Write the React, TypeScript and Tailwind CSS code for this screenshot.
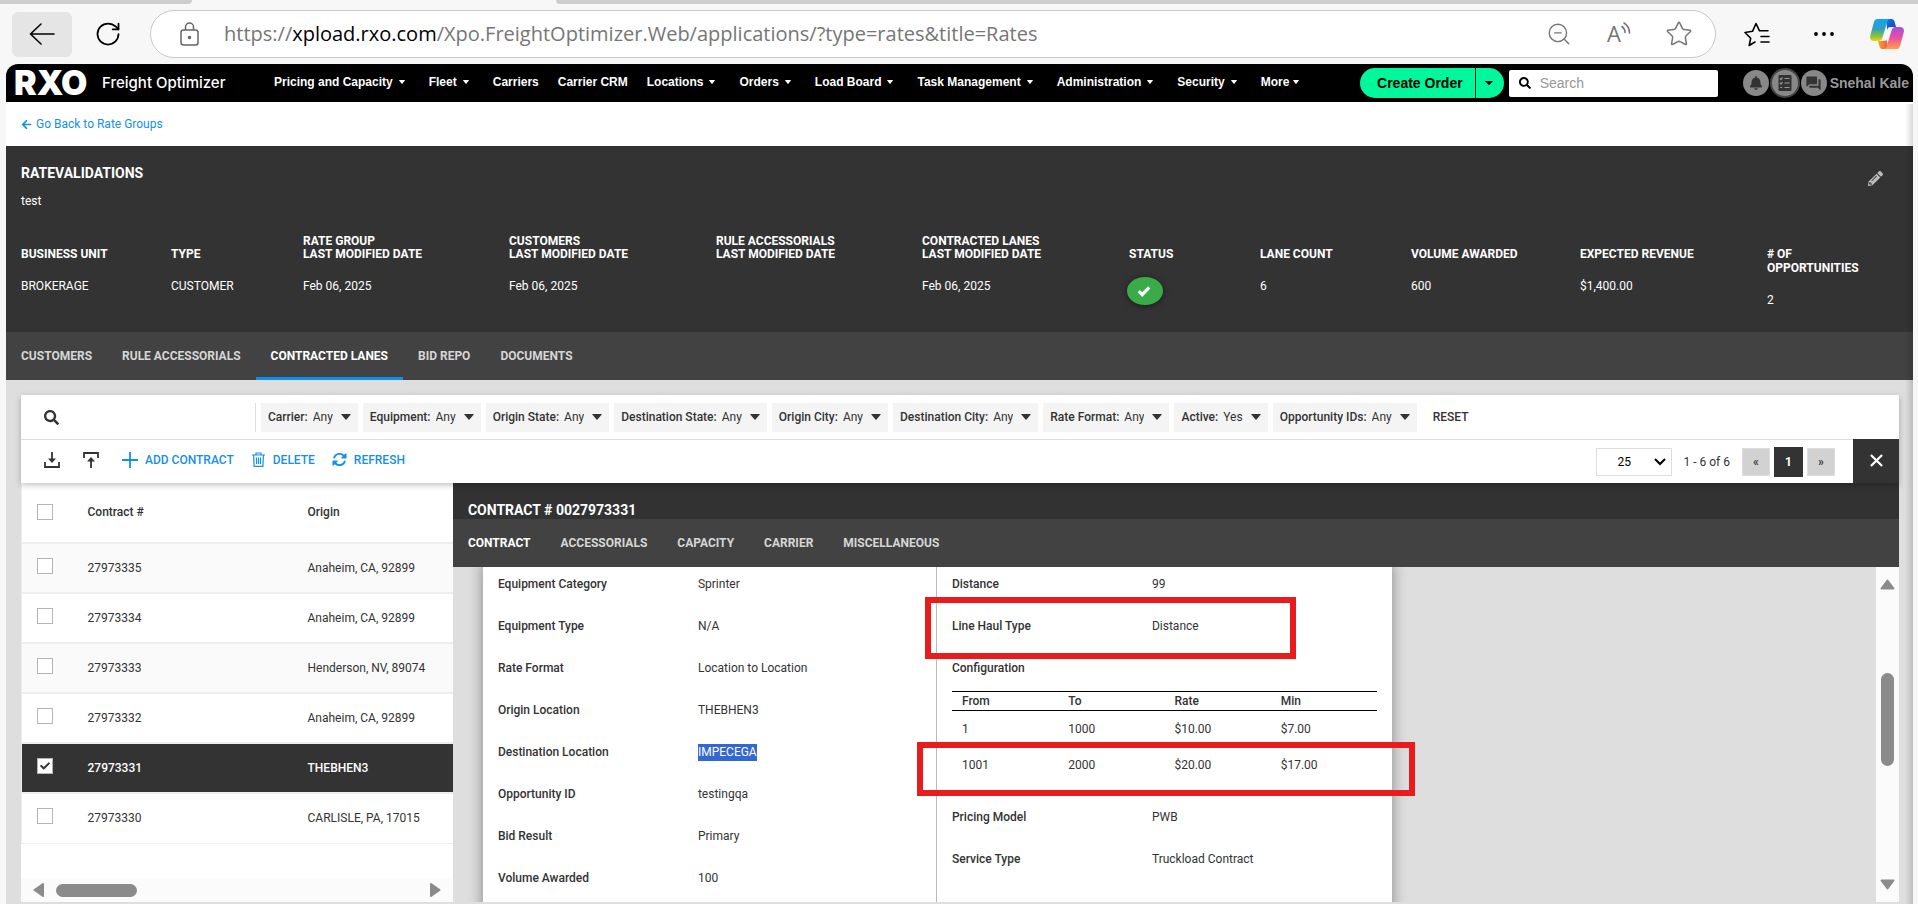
import { useState } from 'react';
import type { ReactNode } from 'react';
import { RotateCw, ZoomOut, Star } from 'lucide-react';
import { FaArrowLeft, FaBell, FaPencilAlt, FaSearch, FaCheck } from 'react-icons/fa';
import { FaRotate } from 'react-icons/fa6';
import { MdForum } from 'react-icons/md';

type NavItem = { label: string; menu: boolean };

const navItems: NavItem[] = [
  { label: 'Pricing and Capacity', menu: true },
  { label: 'Fleet', menu: true },
  { label: 'Carriers', menu: false },
  { label: 'Carrier CRM', menu: false },
  { label: 'Locations', menu: true },
  { label: 'Orders', menu: true },
  { label: 'Load Board', menu: true },
  { label: 'Task Management', menu: true },
  { label: 'Administration', menu: true },
  { label: 'Security', menu: true },
];

type Fact = { over?: string; label: string; value: ReactNode };

const facts: Fact[] = [
  { label: 'BUSINESS UNIT', value: 'BROKERAGE' },
  { label: 'TYPE', value: 'CUSTOMER' },
  { over: 'RATE GROUP', label: 'LAST MODIFIED DATE', value: 'Feb 06, 2025' },
  { over: 'CUSTOMERS', label: 'LAST MODIFIED DATE', value: 'Feb 06, 2025' },
  { over: 'RULE ACCESSORIALS', label: 'LAST MODIFIED DATE', value: '' },
  { over: 'CONTRACTED LANES', label: 'LAST MODIFIED DATE', value: 'Feb 06, 2025' },
  { label: 'STATUS', value: <StatusBadge /> },
  { label: 'LANE COUNT', value: '6' },
  { label: 'VOLUME AWARDED', value: '600' },
  { label: 'EXPECTED REVENUE', value: '$1,400.00' },
  { label: '# OF OPPORTUNITIES', value: '2' },
];

const pageTabs = ['CUSTOMERS', 'RULE ACCESSORIALS', 'CONTRACTED LANES', 'BID REPO', 'DOCUMENTS'];
const detailTabs = ['CONTRACT', 'ACCESSORIALS', 'CAPACITY', 'CARRIER', 'MISCELLANEOUS'];

const filters = [
  { label: 'Carrier', value: 'Any' },
  { label: 'Equipment', value: 'Any' },
  { label: 'Origin State', value: 'Any' },
  { label: 'Destination State', value: 'Any' },
  { label: 'Origin City', value: 'Any' },
  { label: 'Destination City', value: 'Any' },
  { label: 'Rate Format', value: 'Any' },
  { label: 'Active', value: 'Yes' },
  { label: 'Opportunity IDs', value: 'Any' },
];

const contracts = [
  { id: '27973335', origin: 'Anaheim, CA, 92899' },
  { id: '27973334', origin: 'Anaheim, CA, 92899' },
  { id: '27973333', origin: 'Henderson, NV, 89074' },
  { id: '27973332', origin: 'Anaheim, CA, 92899' },
  { id: '27973331', origin: 'THEBHEN3' },
  { id: '27973330', origin: 'CARLISLE, PA, 17015' },
];

const leftFields = [
  { label: 'Equipment Category', value: 'Sprinter' },
  { label: 'Equipment Type', value: 'N/A' },
  { label: 'Rate Format', value: 'Location to Location' },
  { label: 'Origin Location', value: 'THEBHEN3' },
  { label: 'Destination Location', value: 'IMPECEGA', selected: true },
  { label: 'Opportunity ID', value: 'testingqa' },
  { label: 'Bid Result', value: 'Primary' },
  { label: 'Volume Awarded', value: '100' },
];

const rateRows = [
  ['1', '1000', '$10.00', '$7.00'],
  ['1001', '2000', '$20.00', '$17.00'],
];

function StatusBadge() {
  return (
    <span className="-mt-0.5 -ml-0.5 flex h-7 w-9 items-center justify-center rounded-[50%] bg-[#3aab49] pr-0.5 text-white shadow-[0_1px_6px_rgba(0,0,0,0.5)]">
      <svg viewBox="0 0 14 12" className="h-3 w-3.5" role="img" aria-label="Active">
        <path d="M1.800 6.200l3.400 3.400 7-7.200" fill="none" stroke="currentColor" strokeWidth="3.200" />
      </svg>
    </span>
  );
}

function Caret({ className }: { className: string }) {
  return (
    <svg viewBox="0 0 10 6" preserveAspectRatio="none" className={className} aria-hidden="true">
      <path d="M0.6 0h8.8q.8 0 .3.6L5.5 5.6q-.5.5-1 0L.3.6Q-.2 0 .6 0z" fill="currentColor" />
    </svg>
  );
}

function CopilotLogo() {
  return (
    <svg viewBox="0 0 34 30" className="h-[30px] w-[34px]" aria-hidden="true">
      <defs>
        <linearGradient id="cp-a" x1="0" y1="0" x2="0" y2="1">
          <stop offset="0" stopColor="#12a5f5" />
          <stop offset="0.45" stopColor="#2f9fc0" />
          <stop offset="0.75" stopColor="#7dc242" />
          <stop offset="1" stopColor="#f5cf19" />
        </linearGradient>
        <linearGradient id="cp-b" x1="0" y1="0" x2="0" y2="1">
          <stop offset="0" stopColor="#a44ce8" />
          <stop offset="0.5" stopColor="#ee4f9b" />
          <stop offset="1" stopColor="#ffa04a" />
        </linearGradient>
        <linearGradient id="cp-c" x1="0" y1="0" x2="1" y2="1">
          <stop offset="0" stopColor="#0a7ee6" />
          <stop offset="1" stopColor="#1b39c4" />
        </linearGradient>
        <linearGradient id="cp-d" x1="0" y1="0" x2="1" y2="0">
          <stop offset="0" stopColor="#f9a825" />
          <stop offset="1" stopColor="#f0583f" />
        </linearGradient>
      </defs>
      <path d="M16 0h5.5c1.600 0 2.500 1.100 3 2.600L26 8h-4.500c-2.500 0-3.500 1.200-4.200 3z" fill="url(#cp-c)" />
      <path d="M18 30h-5.500c-1.600 0-2.500-1.100-3-2.600L8 22h4.500c2.500 0 3.500-1.200 4.200-3z" fill="url(#cp-d)" />
      <path d="M7.500 0H20c-1.700.3-2.400 1.600-3 3.400L12.700 18c-.8 2.700-2 4-4.500 4H4c-3.300 0-4.600-2.300-3.700-5.500L3.800 3.600C4.500 1.200 5.500 0 7.500 0z" fill="url(#cp-a)" />
      <path d="M26.500 30H14c1.700-.3 2.400-1.600 3-3.400L21.300 12c.8-2.700 2-4 4.500-4H30c3.300 0 4.600 2.300 3.700 5.500l-3.500 12.900c-.7 2.400-1.700 3.600-3.700 3.600z" fill="url(#cp-b)" />
      <path d="M18.500 8.500h3.800L18 21.500h-5.200z" fill="#f7f7f7" />
    </svg>
  );
}

function BrowserBar() {
  return (
    <div className="flex flex-col bg-[#f7f7f7]">
      <div className="flex h-1 justify-between">
        <div className="w-[10%] rounded-br-lg bg-[#cdcdcd]" />
        <div className="w-[71%] rounded-bl-lg bg-[#cdcdcd]" />
      </div>
      <div className="flex items-center py-1.5 pr-3.5 pl-3">
        <button type="button" aria-label="Back" className="flex h-[45px] w-[60px] items-center justify-center rounded-md bg-[#e5e5e5] text-black">
          <svg viewBox="0 0 26 22" className="h-[22px] w-[26px]" fill="none" stroke="currentColor" strokeWidth="1.6" strokeLinecap="round" strokeLinejoin="round" aria-hidden="true">
            <path d="M25 11H1.500M12 1L1.500 11 12 21" />
          </svg>
        </button>
        <button type="button" aria-label="Refresh page" className="ml-[22px] text-black">
          <RotateCw className="h-7 w-7" strokeWidth={1.5} />
        </button>
        <div className="ml-7 flex h-12 flex-1 items-center rounded-full border border-[#c9c9c9] bg-white pr-[22px] pl-[29px]">
          <svg viewBox="0 0 19 24" className="h-6 w-[19px] text-[#666]" fill="none" stroke="currentColor" strokeWidth="1.500" aria-label="Secure">
            <rect x="1" y="8" width="17" height="15" rx="2.500" />
            <path d="M5.500 8V5a4 4 0 0 1 8 0v3" />
            <circle cx="9.500" cy="15.500" r="1" fill="currentColor" />
          </svg>
          <div className="ml-[25px] flex-1 font-['Open_Sans',sans-serif] text-xl whitespace-nowrap text-[#767676]">
            https://<span className="text-black">xpload.rxo.com</span>/Xpo.FreightOptimizer.Web/applications/?type=rates&amp;title=Rates
          </div>
          <div className="flex items-center gap-8 text-[#767676]">
            <button type="button" aria-label="Zoom out" className="flex w-7 justify-center"><ZoomOut className="h-[26px] w-[26px]" strokeWidth={1.300} /></button>
            <button type="button" aria-label="Read aloud" className="w-7">
              <svg viewBox="0 0 28 32" className="h-8 w-7" aria-hidden="true">
                <text x="2" y="24" fontSize="22" fontFamily="Open Sans, sans-serif" fontWeight="400" fill="currentColor">A</text>
                <path d="M17 8.500c2 1.500 3 3.500 3 6M19 5c3.500 2.200 5.500 5.500 5.500 10" fill="none" stroke="currentColor" strokeWidth="1.600" strokeLinecap="round" />
              </svg>
            </button>
            <button type="button" aria-label="Add to favorites"><Star className="h-7 w-7" strokeWidth={1.300} /></button>
          </div>
        </div>
        <button type="button" aria-label="Favorites" className="ml-7 text-black">
          <svg viewBox="0 0 26 25" className="h-[25px] w-[26px]" fill="none" stroke="currentColor" strokeWidth="1.600" strokeLinecap="round" strokeLinejoin="round" aria-hidden="true">
            <path d="M11 20L5.200 23.500l1.500-7.300L1 10.500l7.500-1.200L12 1.500l3.500 7.300h8.500M17 14.500h8M17 20h8" />
          </svg>
        </button>
        <button type="button" aria-label="Settings and more" className="ml-11 text-black">
          <svg viewBox="0 0 20 4" className="h-1 w-5" fill="currentColor" aria-hidden="true">
            <circle cx="2" cy="2" r="1.900" /><circle cx="10" cy="2" r="1.900" /><circle cx="18" cy="2" r="1.900" />
          </svg>
        </button>
        <button type="button" aria-label="Copilot" className="ml-9"><CopilotLogo /></button>
      </div>
    </div>
  );
}

function TopNav() {
  return (
    <header className="flex h-[38px] items-center rounded-t-xl bg-black pr-1 pl-2 font-['Liberation_Sans',Arial,sans-serif] text-white">
      <span className="w-[74px] font-['Inter',sans-serif] text-[34px] leading-none font-black">RXO</span>
      <span className="ml-3.5 w-[172px] font-['Inter',sans-serif] text-[15px] leading-[18px] font-medium whitespace-nowrap">Freight Optimizer</span>
      <nav className="flex items-center pb-0.5 text-xs font-bold whitespace-nowrap">
        {navItems.map((item) => (
          <a key={item.label} href="#" className={item.menu ? 'mr-6 flex items-center gap-1.5' : 'mr-[19px]'}>
            {item.label}
            {item.menu && <Caret className="h-1 w-1.5" />}
          </a>
        ))}
        <a href="#" className="flex items-center gap-1">
          More
          <Caret className="h-1 w-1.5" />
        </a>
      </nav>
      <div className="ml-auto flex items-center">
        <div className="flex h-[30px] text-sm font-bold text-black">
          <button type="button" className="rounded-l-full bg-[#00f79b] pr-3 pl-[17px]">Create Order</button>
          <button type="button" aria-label="More order actions" className="ml-px flex items-center rounded-r-full bg-[#00f79b] pr-[11px] pl-[9px]">
            <Caret className="h-1 w-2" />
          </button>
        </div>
        <label className="ml-[5px] flex h-[27px] w-[209px] items-center gap-2 rounded-xs bg-white pl-[9px] text-black">
          <FaSearch className="h-3 w-3.5" aria-hidden="true" />
          <input type="text" aria-label="Search" placeholder="Search" className="min-w-0 flex-1 text-sm outline-none placeholder:text-[#999]" />
        </label>
        <div className="ml-[25px] flex items-center gap-px text-[#333]">
          <button type="button" aria-label="Notifications" className="flex size-[26px] items-center justify-center rounded-full bg-[#888]"><FaBell className="size-3.5" /></button>
          <button type="button" aria-label="Tasks" className="flex size-[30px] items-center justify-center rounded-full border-2 border-[#444] bg-[#888]">
            <svg viewBox="0 0 14 16" className="h-4 w-3.5" aria-hidden="true">
              <rect x="0.500" y="0" width="13" height="16" rx="1" fill="#333" />
              <path d="M6.500 3.500h5M6.500 8h5M6.500 12.500h5M2 3.500l1 1 1.500-2M2 8l1 1 1.500-2M2.200 12.500h2" stroke="#999" strokeWidth="1.200" fill="none" />
            </svg>
          </button>
          <button type="button" aria-label="Messages" className="flex size-[26px] items-center justify-center rounded-full bg-[#888]"><MdForum className="size-[17px]" /></button>
          <a href="#" className="ml-0.5 text-sm font-bold whitespace-nowrap text-[#999]">Snehal Kale</a>
        </div>
      </div>
    </header>
  );
}

function RateHeader() {
  return (
    <section className="bg-[#333] pt-5 pr-[22px] pb-[25px] pl-[15px] text-white">
      <div className="flex items-start justify-between">
        <div>
          <h1 className="text-sm leading-[14px] font-bold">RATEVALIDATIONS</h1>
          <p className="mt-[14px] leading-[14px]">test</p>
        </div>
        <button type="button" aria-label="Edit rate group" className="mt-[5px] mr-2 text-[#bbb]"><FaPencilAlt className="size-[15px]" /></button>
      </div>
      <dl className="mt-[26px] grid grid-cols-[150fr_132fr_206fr_207fr_206fr_207fr_131fr_151fr_169fr_187fr_124fr]">
        {facts.map((fact, i) => (
          <div key={i}>
            <dt className="font-bold">
              <span className="block h-[13px] leading-[14px]">{fact.over}</span>
              <span className="block leading-[14px]">{fact.label === '# OF OPPORTUNITIES' ? <># OF<br />OPPORTUNITIES</> : fact.label}</span>
            </dt>
            <dd className="mt-[18px] leading-[14px]">{fact.value}</dd>
          </div>
        ))}
      </dl>
    </section>
  );
}

function Tabs({ items, active, marked }: { items: string[]; active: string; marked: boolean }) {
  return (
    <nav className="flex h-12 shrink-0 bg-[#424242] font-bold">
      {items.map((item) => (
        <a
          key={item}
          href="#"
          className={
            item === active
              ? marked
                ? 'flex items-center border-b-[3px] border-[#0e90eb] px-[15px] pt-[3px] text-white'
                : 'flex items-center px-[15px] text-white'
              : 'flex items-center px-[15px] text-[#d6d6d6]'
          }
        >
          {item}
        </a>
      ))}
    </nav>
  );
}

function Toolbar() {
  return (
    <div className="relative z-10 shrink-0 bg-white shadow-[0_2px_6px_rgba(0,0,0,0.25)]">
      <div className="flex h-[45px] items-center border-b border-[#ddd] pl-[23px] text-[#333]">
        <label className="flex h-[29px] w-[212px] items-center gap-2 border-r border-[#ddd]">
          <FaSearch className="size-[15px]" aria-hidden="true" />
          <input type="text" aria-label="Search contracts" className="min-w-0 flex-1 outline-none" />
        </label>
        <div className="ml-[5px] flex gap-[5px]">
          {filters.map((filter) => (
            <label key={filter.label} className="relative flex h-[29px] items-center bg-[#f4f4f4] pl-[7px] whitespace-nowrap">
              <span className="font-medium">{filter.label}:</span>
              <select defaultValue={filter.value} className="ml-[5px] field-sizing-content appearance-none bg-transparent pr-[25px] outline-none">
                <option>{filter.value}</option>
              </select>
              <Caret className="pointer-events-none absolute right-[7px] h-1.5 w-2.5" />
            </label>
          ))}
        </div>
        <button type="button" className="ml-4 font-medium">RESET</button>
      </div>
      <div className="flex h-[43px] items-stretch">
        <div className="flex items-center pb-1 pl-[23px] font-medium text-[#1490e8]">
          <button type="button" aria-label="Download" className="text-[#333]">
            <svg viewBox="0 0 16 16" className="size-4" aria-hidden="true">
              <path d="M1 10v5h14v-5M8 0v8" fill="none" stroke="currentColor" strokeWidth="1.800" />
              <path d="M4 6.500h8L8 11z" fill="currentColor" />
            </svg>
          </button>
          <button type="button" aria-label="Upload" className="ml-[23px] text-[#333]">
            <svg viewBox="0 0 16 16" className="size-4" aria-hidden="true">
              <path d="M1 6V1h14v5M8 16V8" fill="none" stroke="currentColor" strokeWidth="1.800" />
              <path d="M4 9.500h8L8 5z" fill="currentColor" />
            </svg>
          </button>
          <button type="button" className="ml-[23px] flex items-center gap-[7px]">
            <svg viewBox="0 0 16 16" className="size-4" aria-hidden="true"><path d="M8 0v16M0 8h16" stroke="currentColor" strokeWidth="1.800" /></svg>
            ADD CONTRACT
          </button>
          <button type="button" className="ml-[18px] flex items-center gap-2">
            <svg viewBox="0 0 13 15" className="h-[15px] w-[13px]" fill="none" stroke="currentColor" strokeWidth="1.200" aria-hidden="true">
              <path d="M0 3h13M4 3V1h5v2M1.600 3l.5 11.300h8.800L11.400 3M4.500 5.500v6.500M6.500 5.500v6.500M8.500 5.500v6.500" />
            </svg>
            DELETE
          </button>
          <button type="button" className="ml-[17px] flex items-center gap-[7px]">
            <FaRotate className="size-[15px]" aria-hidden="true" />
            REFRESH
          </button>
        </div>
        <div className="ml-auto flex items-center text-[#333]">
          <div className="relative flex items-center text-black">
            <select aria-label="Rows per page" defaultValue="25" className="h-7 w-[76px] appearance-none border border-[#ddd] bg-white pl-[21px] outline-none">
              <option>25</option>
            </select>
            <svg viewBox="0 0 12 8" className="pointer-events-none absolute right-1.5 h-2 w-3" fill="none" stroke="currentColor" strokeWidth="2" aria-hidden="true">
              <path d="M1 1l5 5 5-5" />
            </svg>
          </div>
          <span className="ml-3">1 - 6 of 6</span>
          <button type="button" aria-label="Previous page" className="ml-3 h-7 w-7 border border-[#ddd] bg-[#d2d2d2] font-medium">«</button>
          <button type="button" className="ml-1 h-[30px] w-[29px] bg-[#333] font-bold text-white">1</button>
          <button type="button" aria-label="Next page" className="ml-1 h-7 w-7 border border-[#ddd] bg-[#d2d2d2] font-medium">»</button>
        </div>
        <button type="button" aria-label="Close contract" className="-mt-px ml-[18px] flex w-[46px] items-center justify-center bg-[#333] pb-0.5 text-white">
          <svg viewBox="0 0 14 14" className="size-[13px]" aria-hidden="true"><path d="M1 1l12 12M13 1L1 13" stroke="currentColor" strokeWidth="2.400" /></svg>
        </button>
      </div>
    </div>
  );
}

function TickBox({ label, checked, onChange }: { label: string; checked: boolean; onChange: () => void }) {
  return (
    <span className="grid size-4 place-items-center">
      <input
        type="checkbox"
        aria-label={label}
        checked={checked}
        onChange={onChange}
        className="col-start-1 row-start-1 size-4 appearance-none border border-[#b5b5b5] bg-white"
      />
      {checked && <FaCheck className="pointer-events-none col-start-1 row-start-1 size-2.5 text-[#333]" aria-hidden="true" />}
    </span>
  );
}

function ContractList() {
  const [selected, setSelected] = useState<string[]>(['27973331']);
  const allSelected = selected.length === contracts.length;
  const toggle = (id: string) =>
    setSelected((now) => (now.includes(id) ? now.filter((x) => x !== id) : [...now, id]));

  return (
    <div className="flex w-[23%] shrink-0 flex-col bg-white">
      <table className="w-full table-fixed border-l border-[#eee] text-left">
        <thead>
          <tr className="h-[60px] border-b-2 border-[#eee]">
            <th scope="col" className="w-[66px] pb-0.5 pl-[15px]">
              <TickBox label="Select all contracts" checked={allSelected} onChange={() => setSelected(allSelected ? [] : contracts.map((c) => c.id))} />
            </th>
            <th scope="col" className="w-[51%] pb-0.5 font-medium">Contract #</th>
            <th scope="col" className="pb-0.5 font-medium">Origin</th>
          </tr>
        </thead>
        <tbody>
          {contracts.map((row, i) => {
            const on = selected.includes(row.id);
            const tone = on ? 'bg-[#333] font-medium text-white' : i % 2 === 0 && i < 4 ? 'bg-[#fafafa]' : 'bg-white';
            return (
              <tr key={row.id} className={'h-[50px] border-b-2 border-[#eee] last:border-b ' + tone}>
                <td className="pb-1 pl-[15px]"><TickBox label={'Select contract ' + row.id} checked={on} onChange={() => toggle(row.id)} /></td>
                <td>{row.id}</td>
                <td className="whitespace-nowrap">{row.origin}</td>
              </tr>
            );
          })}
        </tbody>
      </table>
      <div className="mt-auto flex h-6 items-center bg-[#fbfbfb] px-3 text-[#8b8b8b]">
        <svg viewBox="0 0 11 14" className="h-3.5 w-[11px]" aria-hidden="true"><path d="M10 1v12L1.500 7z" fill="currentColor" stroke="currentColor" strokeWidth="2" strokeLinejoin="round" /></svg>
        <div className="ml-3 h-[13px] w-[81px] rounded-full bg-[#8b8b8b]" />
        <svg viewBox="0 0 11 14" className="ml-auto h-3.5 w-[11px]" aria-hidden="true"><path d="M1 1v12L9.500 7z" fill="currentColor" stroke="currentColor" strokeWidth="2" strokeLinejoin="round" /></svg>
      </div>
    </div>
  );
}

function Field({ label, value, selected }: { label: string; value?: string; selected?: boolean }) {
  return (
    <div className="flex h-[42px] items-center">
      <dt className="w-[200px] font-medium">{label}</dt>
      <dd className={selected ? 'bg-[#3367d1] leading-[17px] text-white' : ''}>{value}</dd>
    </div>
  );
}

function ContractDetail() {
  return (
    <div className="flex min-w-0 flex-1 flex-col">
      <h2 className="h-9 shrink-0 bg-[#323232] pt-5 pl-[15px] text-sm leading-[14px] font-bold text-white">CONTRACT # 0027973331</h2>
      <Tabs items={detailTabs} active="CONTRACT" marked={false} />
      <div className="flex min-h-0 flex-1 justify-between">
        <div className="min-w-0 flex-1 overflow-hidden pl-[30px]">
          <div className="-mt-1 grid h-[calc(100%+24px)] w-[909px] max-w-full grid-cols-[453fr_456fr] bg-white shadow-[0_0_14px_rgba(0,0,0,0.4)]">
            <dl className="pl-[15px]">
              {leftFields.map((f) => <Field key={f.label} label={f.label} value={f.value} selected={f.selected} />)}
            </dl>
            <div className="relative border-l border-[#bbb] px-[15px]">
              <dl>
                <Field label="Distance" value="99" />
                <Field label="Line Haul Type" value="Distance" />
                <Field label="Configuration" />
              </dl>
              <table className="mt-0.5 w-full table-fixed text-left">
                <thead>
                  <tr className="h-[19px] border-y border-black">
                    {['From', 'To', 'Rate', 'Min'].map((h) => <th key={h} scope="col" className="pl-2.5 leading-[14px] font-medium">{h}</th>)}
                  </tr>
                </thead>
                <tbody>
                  {rateRows.map((row) => (
                    <tr key={row[0]} className="h-9">
                      {row.map((cell) => <td key={cell} className="pl-2.5">{cell}</td>)}
                    </tr>
                  ))}
                </tbody>
              </table>
              <dl className="mt-[13px]">
                <Field label="Pricing Model" value="PWB" />
                <Field label="Service Type" value="Truckload Contract" />
              </dl>
              <div className="pointer-events-none absolute top-[34px] -left-3 h-[62px] w-[371px] border-6 border-[#e81c1c]" />
              <div className="pointer-events-none absolute top-[179px] -left-5 h-[54px] w-[498px] border-6 border-[#e81c1c]" />
            </div>
          </div>
        </div>
        <div className="flex w-[23px] shrink-0 flex-col items-center bg-[#fbfbfb] py-3 text-[#8b8b8b]">
          <svg viewBox="0 0 15 11" className="h-[11px] w-[15px]" aria-hidden="true"><path d="M1.500 9.500h12L7.500 1.500z" fill="currentColor" stroke="currentColor" strokeWidth="2" strokeLinejoin="round" /></svg>
          <div className="mt-[83px] h-[93px] w-[13px] rounded-full bg-[#8b8b8b]" />
          <svg viewBox="0 0 15 11" className="mt-auto h-[11px] w-[15px]" aria-hidden="true"><path d="M1.500 1.500h12L7.500 9.500z" fill="currentColor" stroke="currentColor" strokeWidth="2" strokeLinejoin="round" /></svg>
        </div>
      </div>
    </div>
  );
}

export default function App() {
  return (
    <div className="flex h-screen flex-col overflow-hidden bg-[#f7f7f7] font-['Roboto',sans-serif] text-xs text-[#333]">
      <BrowserBar />
      <div className="relative mr-[5px] ml-1.5 flex min-h-0 flex-1 flex-col rounded-t-xl bg-white">
        <TopNav />
        <div className="flex h-11 shrink-0 items-center pl-[15px]">
          <a href="#" className="flex items-center gap-1 text-[#1490e8]"><FaArrowLeft className="size-[11px]" aria-hidden="true" />Go Back to Rate Groups</a>
        </div>
        <RateHeader />
        <Tabs items={pageTabs} active="CONTRACTED LANES" marked />
        <main className="flex min-h-0 flex-1 flex-col bg-[#dedede] pt-[15px] pr-3.5 pb-0.5 pl-[15px]">
          <Toolbar />
          <div className="flex min-h-0 flex-1">
            <ContractList />
            <ContractDetail />
          </div>
        </main>
        <div className="pointer-events-none absolute top-10 right-0 bottom-0 w-2 bg-linear-to-r from-transparent to-black/15" />
      </div>
    </div>
  );
}
